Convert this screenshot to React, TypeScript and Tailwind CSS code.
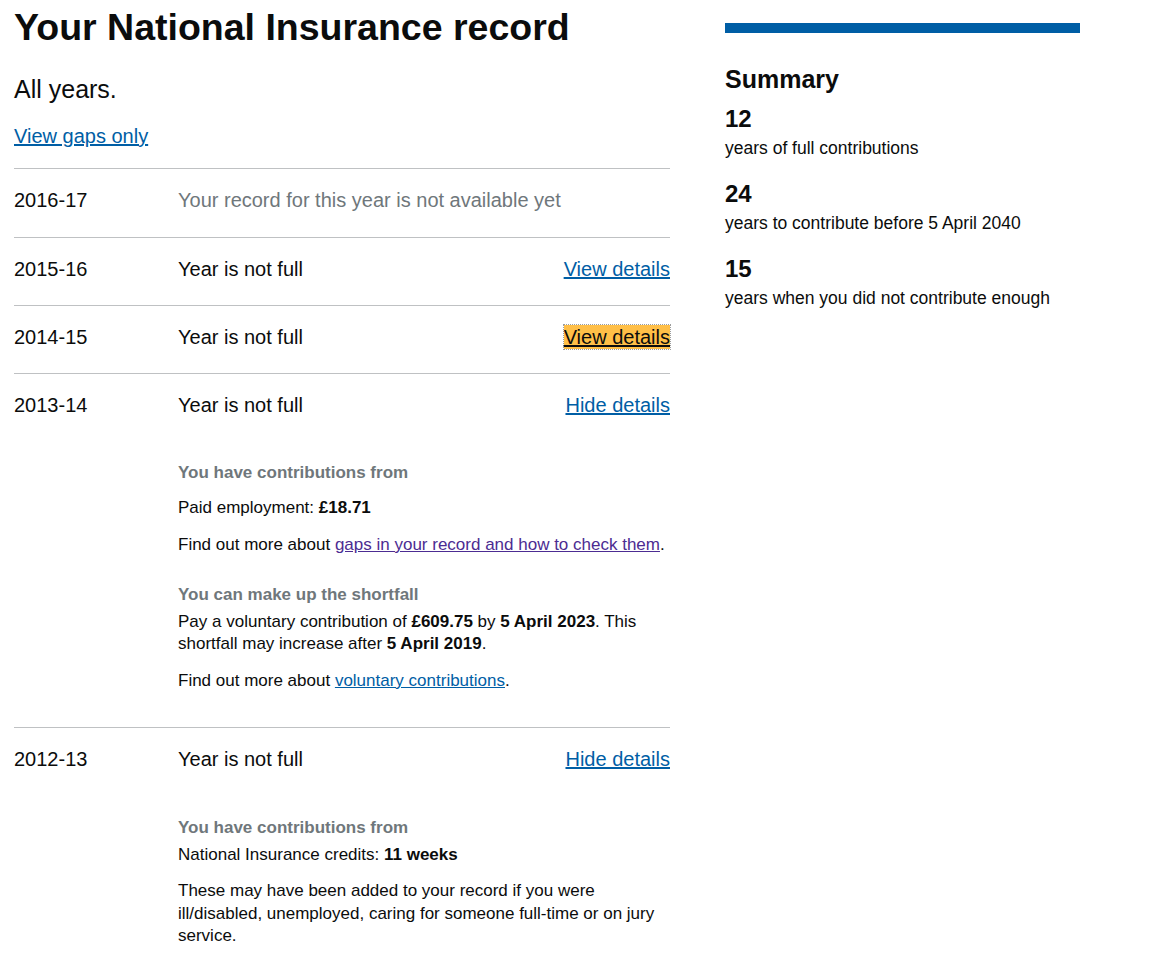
import React from 'react';

const font = { fontFamily: '"Liberation Sans", Arial, sans-serif' };

interface YearRow {
  year: string;
  status: string;
  muted?: boolean;
  link?: string;
  focused?: boolean;
  details?: React.ReactNode;
}

function Row({ row, first }: { row: YearRow; first?: boolean }) {
  return (
    <div className="border-t border-[#bfc1c3]">
      <div
        className={
          first
            ? 'flex items-center pt-[19px] pb-[25px] text-[20px] leading-[24px]'
            : 'flex items-center pt-[19px] pb-[24px] text-[20px] leading-[24px]'
        }
      >
        <span className="w-[164px] shrink-0 text-[#0b0c0c]">{row.year}</span>
        <span className={row.muted ? 'flex-1 text-[#6f777b]' : 'flex-1 text-[#0b0c0c]'}>
          {row.status}
        </span>
        {row.link && (
          <a
            href="#"
            className={
              row.focused
                ? 'bg-[#ffbf47] text-[#0b0c0c] underline outline outline-1 outline-dotted outline-[#0b0c0c]/40'
                : 'text-[#005ea5] underline'
            }
          >
            {row.link}
          </a>
        )}
      </div>
      {row.details}
    </div>
  );
}

export default function App() {
  const rows: YearRow[] = [
    { year: '2016-17', status: 'Your record for this year is not available yet', muted: true },
    { year: '2015-16', status: 'Year is not full', link: 'View details' },
    { year: '2014-15', status: 'Year is not full', link: 'View details', focused: true },
    {
      year: '2013-14',
      status: 'Year is not full',
      link: 'Hide details',
      details: (
        <div className="pl-[164px] pb-[36px] text-[17px] text-[#0b0c0c]">
          <p className="mt-[22px] font-bold leading-[20px] text-[#6f777b]">You have contributions from</p>
          <p className="mt-[15px] leading-[20px]">
            Paid employment: <strong>£18.71</strong>
          </p>
          <p className="mt-[17px] leading-[20px]">
            Find out more about{' '}
            <a href="#" className="text-[#4c2c92] underline">
              gaps in your record and how to check them
            </a>
            .
          </p>
          <p className="mt-[30px] font-bold leading-[20px] text-[#6f777b]">You can make up the shortfall</p>
          <p className="mt-[6px] leading-[22px]">
            Pay a voluntary contribution of <strong>£609.75</strong> by <strong>5 April 2023</strong>. This
            shortfall may increase after <strong>5 April 2019</strong>.
          </p>
          <p className="mt-[16px] leading-[20px]">
            Find out more about{' '}
            <a href="#" className="text-[#005ea5] underline">
              voluntary contributions
            </a>
            .
          </p>
        </div>
      ),
    },
    {
      year: '2012-13',
      status: 'Year is not full',
      link: 'Hide details',
      details: (
        <div className="pl-[164px] pb-[20px] text-[17px] text-[#0b0c0c]">
          <p className="mt-[23px] font-bold leading-[20px] text-[#6f777b]">You have contributions from</p>
          <p className="mt-[7px] leading-[20px]">
            National Insurance credits: <strong>11 weeks</strong>
          </p>
          <p className="mt-[15px] leading-[22.5px]">
            These may have been added to your record if you were ill/disabled, unemployed, caring for someone
            full-time or on jury service.
          </p>
        </div>
      ),
    },
  ];

  const summary = [
    { n: '12', label: 'years of full contributions' },
    { n: '24', label: 'years to contribute before 5 April 2040' },
    { n: '15', label: 'years when you did not contribute enough' },
  ];

  return (
    <div className="min-h-screen bg-white pl-[14px] text-[#0b0c0c]" style={font}>
      <div className="flex items-start gap-[55px]">
        {/* Main column */}
        <div className="w-[656px] pt-[6px]">
          <h1 className="text-[37.5px] font-bold leading-[42px]">Your National Insurance record</h1>
          <p className="mt-[26px] text-[25px] leading-[30px]">All years.</p>
          <a href="#" className="mt-[20px] block w-fit text-[20px] leading-[24px] text-[#005ea5] underline">
            View gaps only
          </a>
          <div className="mt-[20px]">
            {rows.map((row, i) => (
              <Row key={row.year} row={row} first={i === 0} />
            ))}
          </div>
        </div>

        {/* Summary */}
        <aside className="w-[355px] pt-[23px]">
          <div className="h-[10px] bg-[#005ea5]" />
          <h2 className="mt-[31px] text-[25px] font-bold leading-[30px]">Summary</h2>
          {summary.map((s, i) => (
            <div key={s.n} className={i === 0 ? 'mt-[10px]' : 'mt-[21px]'}>
              <p className="text-[24px] font-bold leading-[30px]">{s.n}</p>
              <p className="mt-[4px] text-[17.5px] leading-[20px]">{s.label}</p>
            </div>
          ))}
        </aside>
      </div>
    </div>
  );
}
